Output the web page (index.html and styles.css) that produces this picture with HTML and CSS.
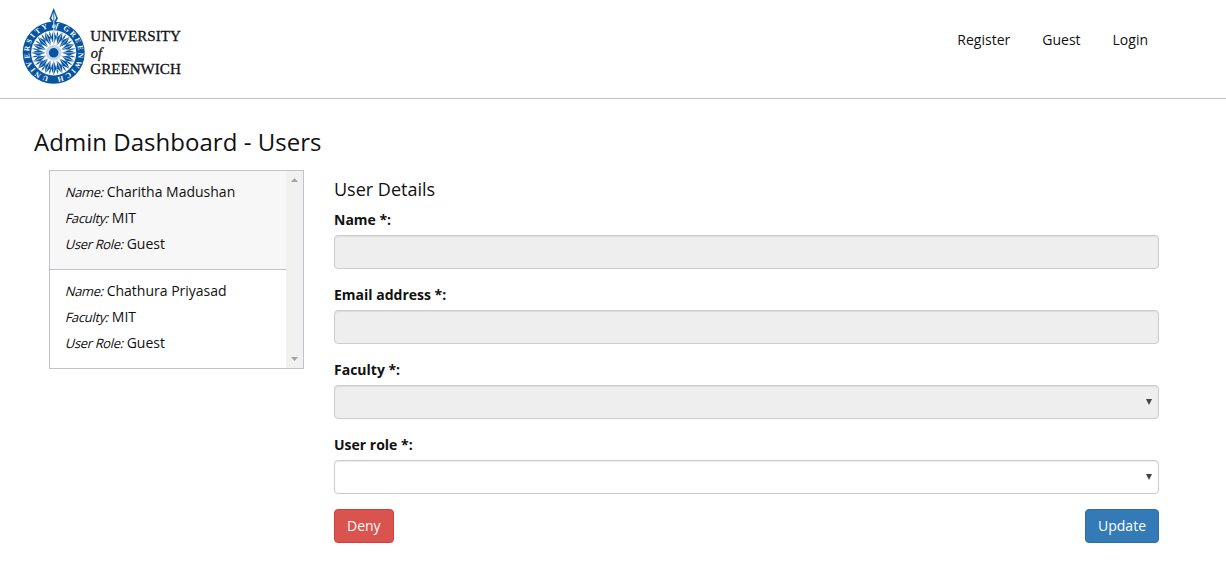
FILE: index.html
```html
<!DOCTYPE html>
<html lang="en">
<head>
<meta charset="utf-8">
<title>Admin Dashboard - Users</title>
<link rel="stylesheet" href="styles.css">
</head>
<body>
<header class="header">
  <svg class="logo" width="162" height="80" viewBox="22 6 162 80" role="img" aria-label="University of Greenwich">
    <defs>
      <path id="ring" d="M53.7 77.2A24.6 24.6 0 0 1 53.7 28A24.6 24.6 0 0 1 53.7 77.2"/>
      <path id="ray" d="M0-8L2.7-15.5L0-22.5L-2.7-15.5Z"/>
      <path id="thin" d="M0-12L.7-19L0-22.5L-.7-19Z"/>
      <g id="quarter">
        <use href="#ray"/><use href="#ray" transform="rotate(22.5)"/><use href="#ray" transform="rotate(45)"/><use href="#ray" transform="rotate(67.5)"/>
        <use href="#thin" transform="rotate(11.25)"/><use href="#thin" transform="rotate(33.75)"/><use href="#thin" transform="rotate(56.25)"/><use href="#thin" transform="rotate(78.75)"/>
      </g>
    </defs>
    <circle class="logo-blue" cx="53.7" cy="52.8" r="31"/>
    <circle class="logo-white" cx="53.7" cy="52.8" r="22.6"/>
    <g class="logo-blue" transform="translate(53.7 52.8)">
      <use href="#quarter"/><use href="#quarter" transform="rotate(90)"/><use href="#quarter" transform="rotate(180)"/><use href="#quarter" transform="rotate(270)"/>
      <path class="logo-vein" d="M0-22V22M-22 0H22M-15.5-15.5L15.5 15.5M15.5-15.5L-15.5 15.5M-8.4-20.3L8.4 20.3M8.4-20.3L-8.4 20.3M-20.3-8.4L20.3 8.4M-20.3 8.4L20.3-8.4"/>
      <circle class="logo-hub" r="6.3"/>
      <circle r="4"/>
    </g>
    <path class="logo-blue" d="M53.7 8L57.8 18.5L55.2 23.5H52.2L49.6 18.5Z"/>
    <path class="logo-white" d="M53.4 12V21.5L51.3 18.3ZM54.3 12L56.1 18.3L54.3 21.5Z"/>
    <path class="logo-needle" d="M53.8 21V44"/>
    <text class="logo-ring"><textPath href="#ring" startOffset="5" textLength="66" lengthAdjust="spacing">UNIVERSITY</textPath></text>
    <text class="logo-ring logo-italic"><textPath href="#ring" startOffset="75">of</textPath></text>
    <text class="logo-ring"><textPath href="#ring" startOffset="86" textLength="64" lengthAdjust="spacing">GREENWICH</textPath></text>
    <text class="logo-name" x="90.3" y="41.3" textLength="90.5" lengthAdjust="spacingAndGlyphs">UNIVERSITY</text>
    <text class="logo-name logo-italic" x="90.8" y="58.4">of</text>
    <text class="logo-name" x="90.3" y="74.2" textLength="90.5" lengthAdjust="spacingAndGlyphs">GREENWICH</text>
  </svg>
  <nav class="nav"><a>Register</a><a>Guest</a><a>Login</a></nav>
</header>
<main class="main">
  <h1 class="title">Admin Dashboard - Users</h1>
  <div class="columns">
    <section class="users">
      <div class="user-list">
        <div class="user user-active">
          <p><i>Name:</i> Charitha Madushan</p>
          <p><i>Faculty:</i> MIT</p>
          <p><i>User Role:</i> Guest</p>
        </div>
        <div class="user">
          <p><i>Name:</i> Chathura Priyasad</p>
          <p><i>Faculty:</i> MIT</p>
          <p><i>User Role:</i> Guest</p>
        </div>
      </div>
      <div class="scrollbar">
        <svg width="7" height="4" viewBox="0 0 7 4"><path d="M0 4L3.5 0L7 4Z"/></svg>
        <svg width="7" height="4" viewBox="0 0 7 4"><path d="M0 0H7L3.5 4Z"/></svg>
      </div>
    </section>
    <form class="details">
      <h2 class="subtitle">User Details</h2>
      <label class="label">Name *:</label>
      <div class="field field-disabled"></div>
      <label class="label">Email address *:</label>
      <div class="field field-disabled"></div>
      <label class="label">Faculty *:</label>
      <div class="field field-disabled"><svg width="6" height="6" viewBox="0 0 6 6"><path d="M0 0H6L3 6Z"/></svg></div>
      <label class="label">User role *:</label>
      <div class="field"><svg width="6" height="6" viewBox="0 0 6 6"><path d="M0 0H6L3 6Z"/></svg></div>
      <div class="actions">
        <button type="button" class="btn btn-deny">Deny</button>
        <button type="button" class="btn btn-update">Update</button>
      </div>
    </form>
  </div>
</main>
</body>
</html>
```
FILE: styles.css
```css
* { box-sizing: border-box; }
body {
  margin: 0;
  background: #fff;
  color: #111;
  font: 14px/20px "Open Sans", sans-serif;
}
.header {
  display: flex;
  justify-content: space-between;
  align-items: flex-start;
  height: 99px;
  padding: 6px 78px 0 22px;
  border-bottom: 1px solid #c0c3ca;
}
.logo { display: block; }
.logo-blue { fill: #0754a0; }
.logo-white { fill: #fff; }
.logo-vein { fill: none; stroke: #fff; stroke-width: 0.6; }
.logo-hub { fill: #0754a0; stroke: #c3d5e8; stroke-width: 3; }
.logo-needle { stroke: #dce8f3; stroke-width: 1; }
.logo-ring { fill: #fff; font: bold 7.5px "Liberation Serif", serif; }
.logo-name { fill: #111; stroke: #111; stroke-width: 0.3; font: 14.5px "Liberation Serif", serif; }
.logo-italic { font-style: italic; }
.nav { display: flex; gap: 32px; padding-top: 24px; }
.main { padding: 26px 67px 0 34px; }
.title { margin: 0; font-size: 24px; line-height: 33px; font-weight: 400; letter-spacing: 0.03px; }
.columns { display: flex; gap: 30px; padding: 12px 0 0 15px; }
.users {
  display: flex;
  flex: 0 0 255px;
  height: 199px;
  border: 1px solid #c0c3ca;
}
.user-list { flex: 1; }
.user { height: 98px; padding: 8px 16px; }
.user-active { height: 99px; background: #f7f7f7; border-bottom: 1px solid #c0c3ca; }
.user p { margin: 0; line-height: 26px; white-space: nowrap; }
.user i {
  display: inline-block;
  margin-right: -1px;
  font-size: 13px;
  font-style: normal;
  letter-spacing: -0.35px;
  line-height: 20px;
  transform: skewX(-14deg);
}
.scrollbar {
  display: flex;
  flex-direction: column;
  justify-content: space-between;
  align-items: center;
  width: 17px;
  padding: 7px 0;
  background: #f1f1f1;
  fill: #a3a3a3;
}
.details { flex: 1; padding-top: 7px; }
.subtitle { margin: 0 0 8px; font-size: 18px; line-height: 25px; font-weight: 400; }
.label { display: block; margin-bottom: 5px; font-weight: 700; }
.field {
  display: flex;
  align-items: center;
  justify-content: flex-end;
  height: 34px;
  margin-bottom: 16px;
  padding-right: 6px;
  border: 1px solid #ccc;
  border-radius: 4px;
  background: #fff;
  box-shadow: inset 0 1px 1px rgba(0, 0, 0, .075);
  fill: #444;
}
.field-disabled { background: #eee; }
.actions { display: flex; justify-content: space-between; margin-top: -1px; }
.btn {
  height: 34px;
  padding: 6px 12px;
  border: 1px solid;
  border-radius: 4px;
  color: #fff;
  font: inherit;
}
.btn-deny { background: #d9534f; border-color: #d43f3a; }
.btn-update { background: #337ab7; border-color: #2e6da4; }
```
